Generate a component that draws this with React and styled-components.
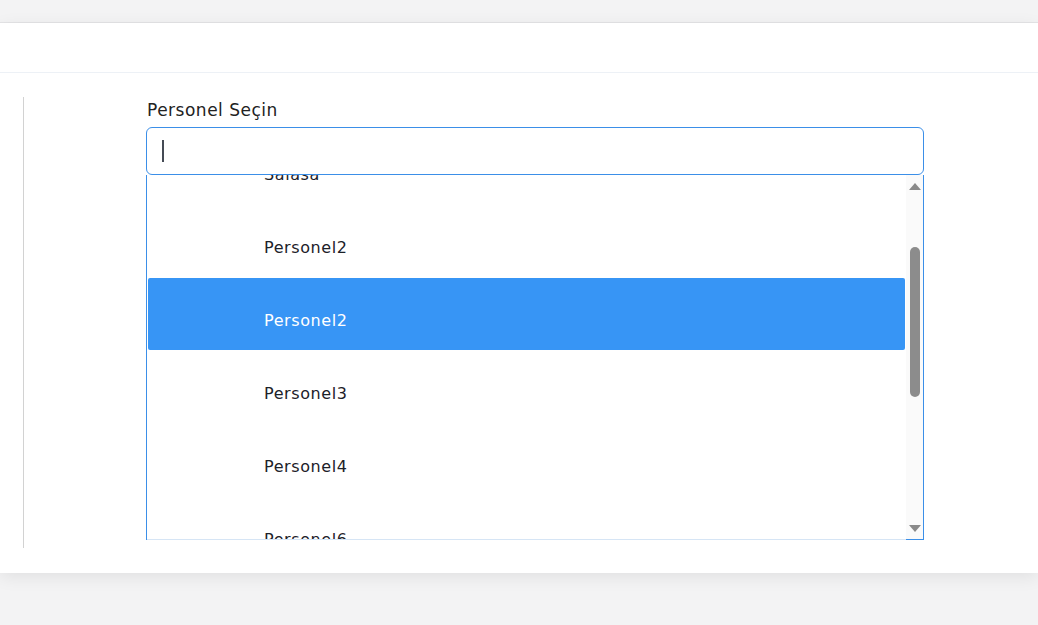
import React, { useLayoutEffect, useRef } from "react";
import styled, { createGlobalStyle } from "styled-components";

const GlobalStyle = createGlobalStyle`
    html, body {
        margin: 0;
        padding: 0;
        background: #f3f3f4;
        font-family: "DejaVu Sans", "Noto Sans", sans-serif;
    }
`;

const options = [
    "Personel1",
    "Salasa",
    "Personel2",
    "Personel2",
    "Personel3",
    "Personel4",
    "Personel6",
    "Personel7",
];

export default function App() {
    const listRef = useRef(null);

    useLayoutEffect(() => {
        if (listRef.current) listRef.current.scrollTop = 117;
    }, []);

    return (
        <>
            <GlobalStyle />
            <Page>
                <TopStrip />
                <Card>
                    <CardHeader />
                    <CardBody>
                        <Column>
                            <Field>
                                <Label>Personel Seçin</Label>
                                <SearchBox>
                                    <Caret />
                                </SearchBox>
                                <ListBox>
                                    <Viewport ref={listRef}>
                                        {options.map((name, i) => (
                                            <Option
                                                key={i}
                                                $active={i === 3}
                                            >
                                                {name}
                                            </Option>
                                        ))}
                                    </Viewport>
                                    <Track>
                                        <Arrow $dir='up' />
                                        <ThumbArea>
                                            <Thumb />
                                        </ThumbArea>
                                        <Arrow $dir='down' />
                                    </Track>
                                </ListBox>
                            </Field>
                        </Column>
                    </CardBody>
                </Card>
            </Page>
        </>
    );
}

const Page = styled.div`
    min-height: 625px;
    background: #f3f3f4;
`;

const TopStrip = styled.div`
    height: 22px;
    background: #f3f3f4;
    border-bottom: 1px solid #e4e4e6;
`;

const Card = styled.div`
    background: #fff;
    box-shadow: 0 4px 16px rgba(0, 0, 0, 0.08);
`;

const CardHeader = styled.div`
    height: 49px;
    border-bottom: 1px solid #edf1f6;
`;

const CardBody = styled.div`
    padding: 24px 0 25px 23px;
`;

const Column = styled.div`
    border-left: 1px solid #d2d2d2;
    height: 451px;
    padding-left: 122px;
`;

const Field = styled.div`
    width: 778px;
`;

const Label = styled.div`
    font-size: 17px;
    letter-spacing: 0.5px;
    line-height: 20px;
    color: #222;
    padding: 3px 0 0 1px;
    margin-bottom: 7px;
`;

const SearchBox = styled.div`
    box-sizing: border-box;
    height: 48px;
    border: 1px solid #3b8fe8;
    border-radius: 6px;
    display: flex;
    align-items: center;
    padding-left: 15px;
`;

const Caret = styled.span`
    width: 2px;
    height: 22px;
    background: #454b55;
`;

const ListBox = styled.div`
    display: flex;
    height: 365px;
    border-left: 1px solid #3b8fe8;
    border-right: 1px solid #3b8fe8;
    box-sizing: border-box;
`;

const Viewport = styled.div`
    flex: 1;
    overflow: hidden;
    border-bottom: 1px solid #d6e5f5;
`;

const Option = styled.div`
    height: 72px;
    margin: 1px;
    border-radius: 2px;
    box-sizing: border-box;
    display: flex;
    align-items: center;
    padding: 12px 0 0 116px;
    font-size: 16px;
    letter-spacing: 0.6px;
    color: ${(p) => (p.$active ? "#fff" : "#1c2129")};
    background: ${(p) => (p.$active ? "#3795f5" : "transparent")};
`;

const Track = styled.div`
    width: 17px;
    background: #fafafa;
    display: flex;
    flex-direction: column;
    align-items: center;
    border-bottom: 1px solid #3b8fe8;
`;

const Arrow = styled.div`
    width: 0;
    height: 0;
    margin: ${(p) => (p.$dir === "up" ? "8px 0 4px" : "4px 0 7px")};
    border-left: 6px solid transparent;
    border-right: 6px solid transparent;
    ${(p) =>
        p.$dir === "up"
            ? "border-bottom: 7px solid #8a8a8a;"
            : "border-top: 7px solid #8a8a8a;"}
`;

const ThumbArea = styled.div`
    flex: 1;
    width: 100%;
    display: flex;
    justify-content: center;
    padding-top: 53px;
`;

const Thumb = styled.div`
    width: 10px;
    height: 150px;
    border-radius: 5px;
    background: #8c8c8c;
`;
